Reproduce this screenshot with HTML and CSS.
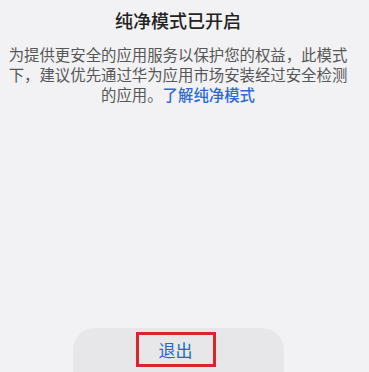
FILE: index.html
```html
<!DOCTYPE html>
<html lang="zh-CN">
<head>
    <meta charset="utf-8">
    <link rel="stylesheet" href="styles.css">
</head>
<body>
    <!-- Pantalla de aviso -->
    <div class="pantalla">
        <div class="titulo">纯净模式已开启</div>
        <p class="texto">为提供更安全的应用服务以保护您的权益，此模式<br>下，建议优先通过华为应用市场安装经过安全检测<br>的应用。<a class="enlace" href="#">了解纯净模式</a></p>

        <!-- Botón inferior -->
        <div class="barra">
            <span class="salir">退出</span>
        </div>
    </div>
</body>
</html>
```

FILE: styles.css
```css
body {
    margin: 0;
    padding: 0;
    background-color: #f2f2f4;
    font-family: "Noto Sans CJK SC", "Noto Sans", sans-serif;
}

.pantalla {
    width: 356px;
    height: 372px;
    display: flex;
    flex-direction: column;
    align-items: center;
}

.titulo {
    margin-top: 8px;
    font-size: 18px;
    line-height: 24px;
    font-weight: 500;
    color: #222222;
}

.texto {
    width: 342px;
    margin: 12px 0 0 0;
    font-size: 15.4px;
    line-height: 20px;
    color: #575757;
    text-align: center;
    white-space: nowrap;
}

.enlace {
    display: inline-block;
    line-height: 20px;
    color: #2b6bd2;
    text-decoration: none;
    font-weight: 500;
}

.barra {
    margin-top: auto;
    width: 211px;
    height: 44px;
    padding-top: 4px;
    box-sizing: border-box;
    border-radius: 22px 22px 0 0;
    background-color: #e7e7e9;
    display: flex;
    justify-content: center;
    align-items: flex-start;
}

.salir {
    width: 80px;
    height: 35px;
    box-sizing: border-box;
    border: 3px solid #d8262e;
    margin-right: 5px;
    display: flex;
    justify-content: center;
    align-items: center;
    font-size: 17px;
    color: #2b63c8;
}
```
